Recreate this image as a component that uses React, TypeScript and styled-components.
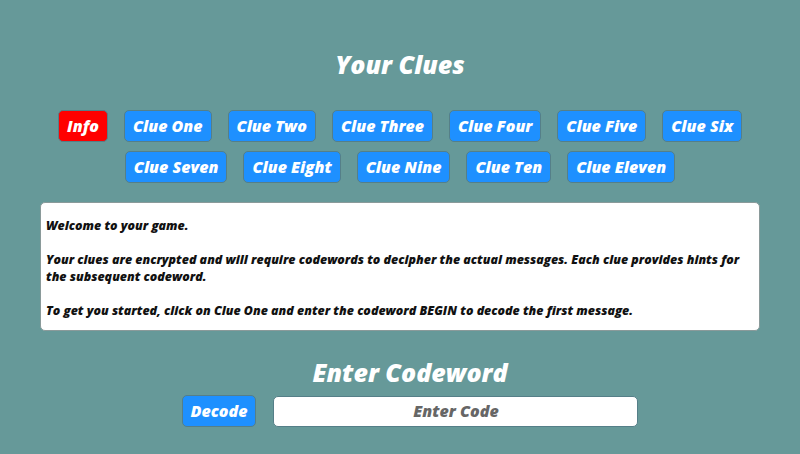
import styled, { createGlobalStyle } from "styled-components";

const GlobalStyle = createGlobalStyle`
  html, body {
    margin: 0;
    padding: 0;
    background: #669999;
  }
  body {
    font-family: "Open Sans", "DejaVu Sans", sans-serif;
    font-weight: 800;
    font-style: italic;
  }
`;

const Page = styled.div`
  width: 800px;
  height: 454px;
  display: flex;
  flex-direction: column;
  align-items: center;
  padding-top: 47px;
  box-sizing: border-box;
`;

const Heading = styled.h1`
  margin: 0;
  font-size: 25px;
  line-height: 34px;
  color: #ffffff;
  font-weight: 800;
  font-style: italic;
`;

const ClueRows = styled.div`
  margin-top: 29px;
  display: flex;
  flex-direction: column;
  align-items: center;
  gap: 9px;
`;

const ClueRow = styled.div`
  display: flex;
  justify-content: center;
  gap: 16px;
`;

const Button = styled.button<{ $danger?: boolean }>`
  height: 32px;
  padding: 0 8px;
  border: 1px solid #557f88;
  border-radius: 5px;
  background: ${(p) => (p.$danger ? "#ff0000" : "#1e90ff")};
  color: #ffffff;
  font-family: "Open Sans", "DejaVu Sans", sans-serif;
  font-weight: 800;
  font-style: italic;
  font-size: 16px;
  cursor: pointer;
`;

const InfoBox = styled.div`
  margin-top: 19px;
  width: 720px;
  height: 129px;
  box-sizing: border-box;
  background: #ffffff;
  border: 1px solid #8a9a9a;
  border-radius: 5px;
  padding: 14px 5px 0;
  font-size: 12.4px;
  line-height: 17px;
  color: #111111;
`;

const Para = styled.p`
  margin: 0 0 17px;
`;

const CodeSection = styled.div`
  margin-top: 24px;
  padding-left: 20px;
  display: flex;
  flex-direction: column;
  align-items: center;
`;

const DecodeRow = styled.div`
  margin-top: 6px;
  display: flex;
  align-items: center;
  gap: 17px;
`;

const CodeInput = styled.input`
  width: 365px;
  height: 31px;
  box-sizing: border-box;
  border: 1px solid #557f88;
  border-radius: 5px;
  background: #ffffff;
  text-align: center;
  font-family: "Open Sans", "DejaVu Sans", sans-serif;
  font-weight: 800;
  font-style: italic;
  font-size: 16px;
  color: #333;
  outline: none;
  &::placeholder {
    color: #666666;
  }
`;

const rowOne = ["Clue One", "Clue Two", "Clue Three", "Clue Four", "Clue Five", "Clue Six"];
const rowTwo = ["Clue Seven", "Clue Eight", "Clue Nine", "Clue Ten", "Clue Eleven"];

export default function App() {
  return (
    <>
      <GlobalStyle />
      <Page>
        <Heading>Your Clues</Heading>
        <ClueRows>
          <ClueRow>
            <Button $danger>Info</Button>
            {rowOne.map((c) => (
              <Button key={c}>{c}</Button>
            ))}
          </ClueRow>
          <ClueRow>
            {rowTwo.map((c) => (
              <Button key={c}>{c}</Button>
            ))}
          </ClueRow>
        </ClueRows>
        <InfoBox>
          <Para>Welcome to your game.</Para>
          <Para>
            Your clues are encrypted and will require codewords to decipher the actual messages. Each clue
            provides hints for the subsequent codeword.
          </Para>
          <Para>To get you started, click on Clue One and enter the codeword BEGIN to decode the first message.</Para>
        </InfoBox>
        <CodeSection>
          <Heading>Enter Codeword</Heading>
          <DecodeRow>
            <Button>Decode</Button>
            <CodeInput placeholder="Enter Code" />
          </DecodeRow>
        </CodeSection>
      </Page>
    </>
  );
}
